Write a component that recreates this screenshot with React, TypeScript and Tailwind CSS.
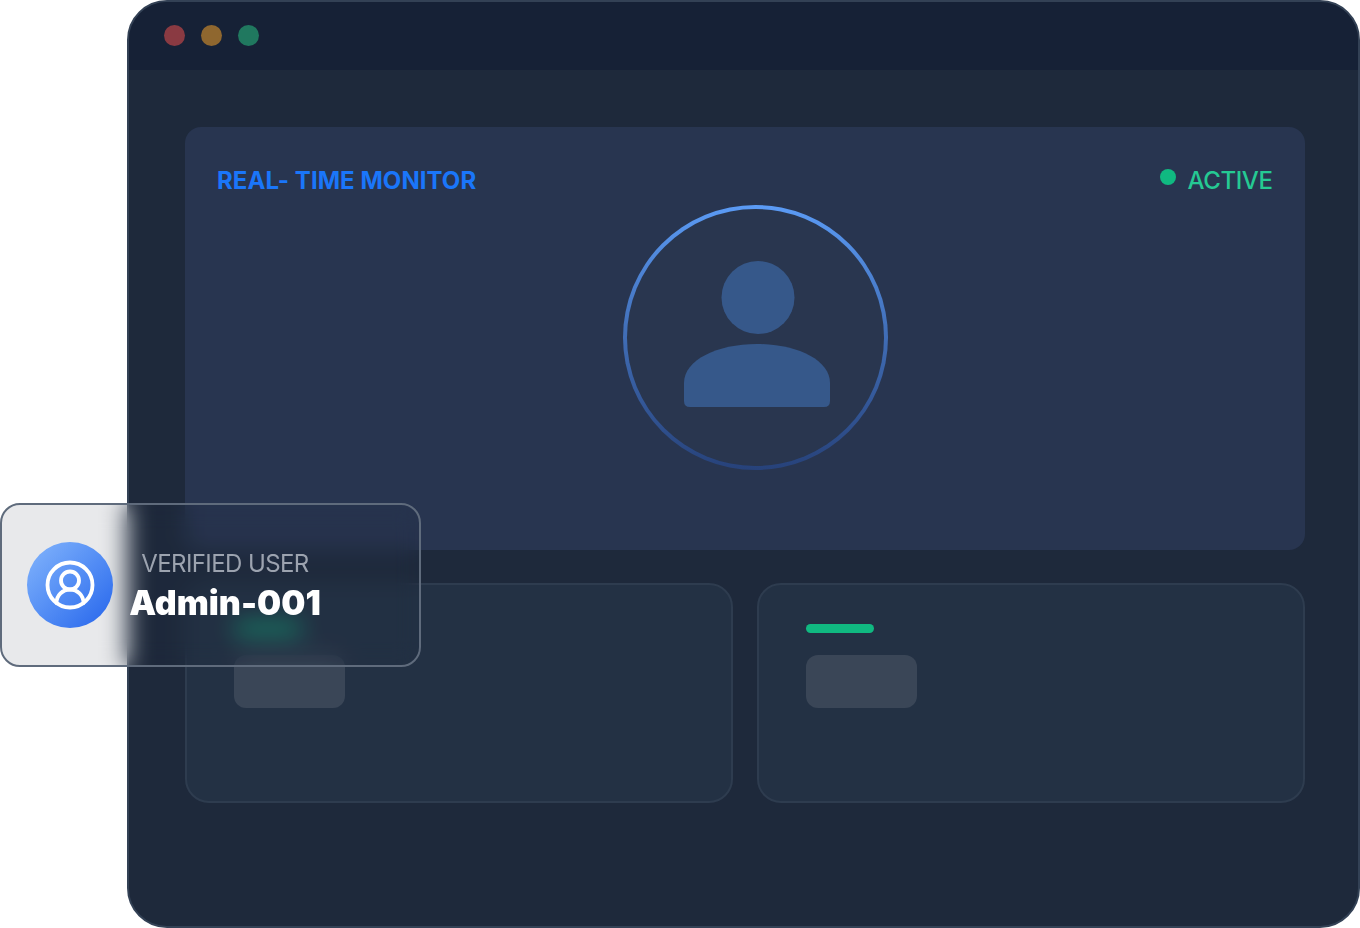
import React from 'react';
import { CircleUserRound } from 'lucide-react';

const font = 'font-["Inter","Liberation_Sans",sans-serif]';

const StatCard: React.FC = () => (
  <div className="h-[220px] rounded-[24px] border-2 border-[#2e3c4f] bg-[#233144] pl-[47px] pt-[39px]">
    <div className="h-[9px] w-[68px] rounded-full bg-[#10b981]" />
    <div className="mt-[22px] h-[53px] w-[111px] rounded-[12px] bg-[#3a4657]" />
  </div>
);

export default function App() {
  return (
    <div className={`relative h-[928px] w-[1360px] overflow-hidden bg-white pl-[127px] ${font}`}>
      <div className="h-[928px] w-[1233px] overflow-hidden rounded-[40px] border-2 border-[#334155] bg-[#1e293b]">
        <div className="flex h-[68px] items-center gap-4 bg-[#162136] pb-[2px] pl-[35px]">
          <span className="h-[21px] w-[21px] rounded-full bg-[#8a3a42]" />
          <span className="h-[21px] w-[21px] rounded-full bg-[#8f672f]" />
          <span className="h-[21px] w-[21px] rounded-full bg-[#20785f]" />
        </div>

        <div className="pl-[56px] pr-[53.5px] pt-[57px]">
          <div className="h-[423px] rounded-[16px] bg-[#283550] px-8 pt-[36px]">
            <div className="flex h-[36px] items-center justify-between">
              <h2 className="text-[24px] leading-9 font-bold tracking-[0.05px] text-[#1a76fa]">REAL- TIME MONITOR</h2>
              <div className="flex items-center gap-[11px]">
                <span className="mb-[8px] h-4 w-4 rounded-full bg-[#10b981]" />
                <span className="text-[24px] leading-9 font-medium tracking-[-0.4px] text-[#25c993]">ACTIVE</span>
              </div>
            </div>

            <div className="mt-[6px] flex justify-center pl-[22px]">
              <div className="h-[265px] w-[265px] rounded-full bg-linear-to-b from-[#5b9bf5] to-[#27427a] p-[4px]">
                <div className="flex h-full w-full items-center justify-center rounded-full bg-[#29364f]">
                  <svg width="146" height="146" viewBox="0 0 146 146" className="-mt-[7px] ml-[3px] text-[#36588a]" fill="currentColor">
                    <circle cx="74" cy="36.5" r="36.5" />
                    <path d="M0 122 C0 99 33 83 73 83 C113 83 146 99 146 122 L146 140 Q146 146 140 146 L6 146 Q0 146 0 140 Z" />
                  </svg>
                </div>
              </div>
            </div>
          </div>

          <div className="mt-[33px] grid grid-cols-2 gap-6">
            <StatCard />
            <StatCard />
          </div>
        </div>
      </div>

      <div className="absolute left-0 top-[503px] flex h-[164px] w-[421px] items-center rounded-[20px] border-2 border-[#5f6b7c] bg-[#1e293b]/10 pl-[25px] backdrop-blur-md">
        <div className="flex h-[86px] w-[86px] shrink-0 items-center justify-center rounded-full bg-linear-to-br from-[#84b5fc] to-[#2563eb] text-white">
          <CircleUserRound size={54} strokeWidth={1.7} />
        </div>
        <div className="ml-[14px] flex w-[196px] flex-col items-center">
          <span className="-mt-[1px] text-[24px] leading-9 font-normal tracking-[-0.6px] text-[#9ca3af]">VERIFIED USER</span>
          <span className="mt-[1px] text-[34px] leading-10 font-black text-white">Admin-001</span>
        </div>
      </div>
    </div>
  );
}
